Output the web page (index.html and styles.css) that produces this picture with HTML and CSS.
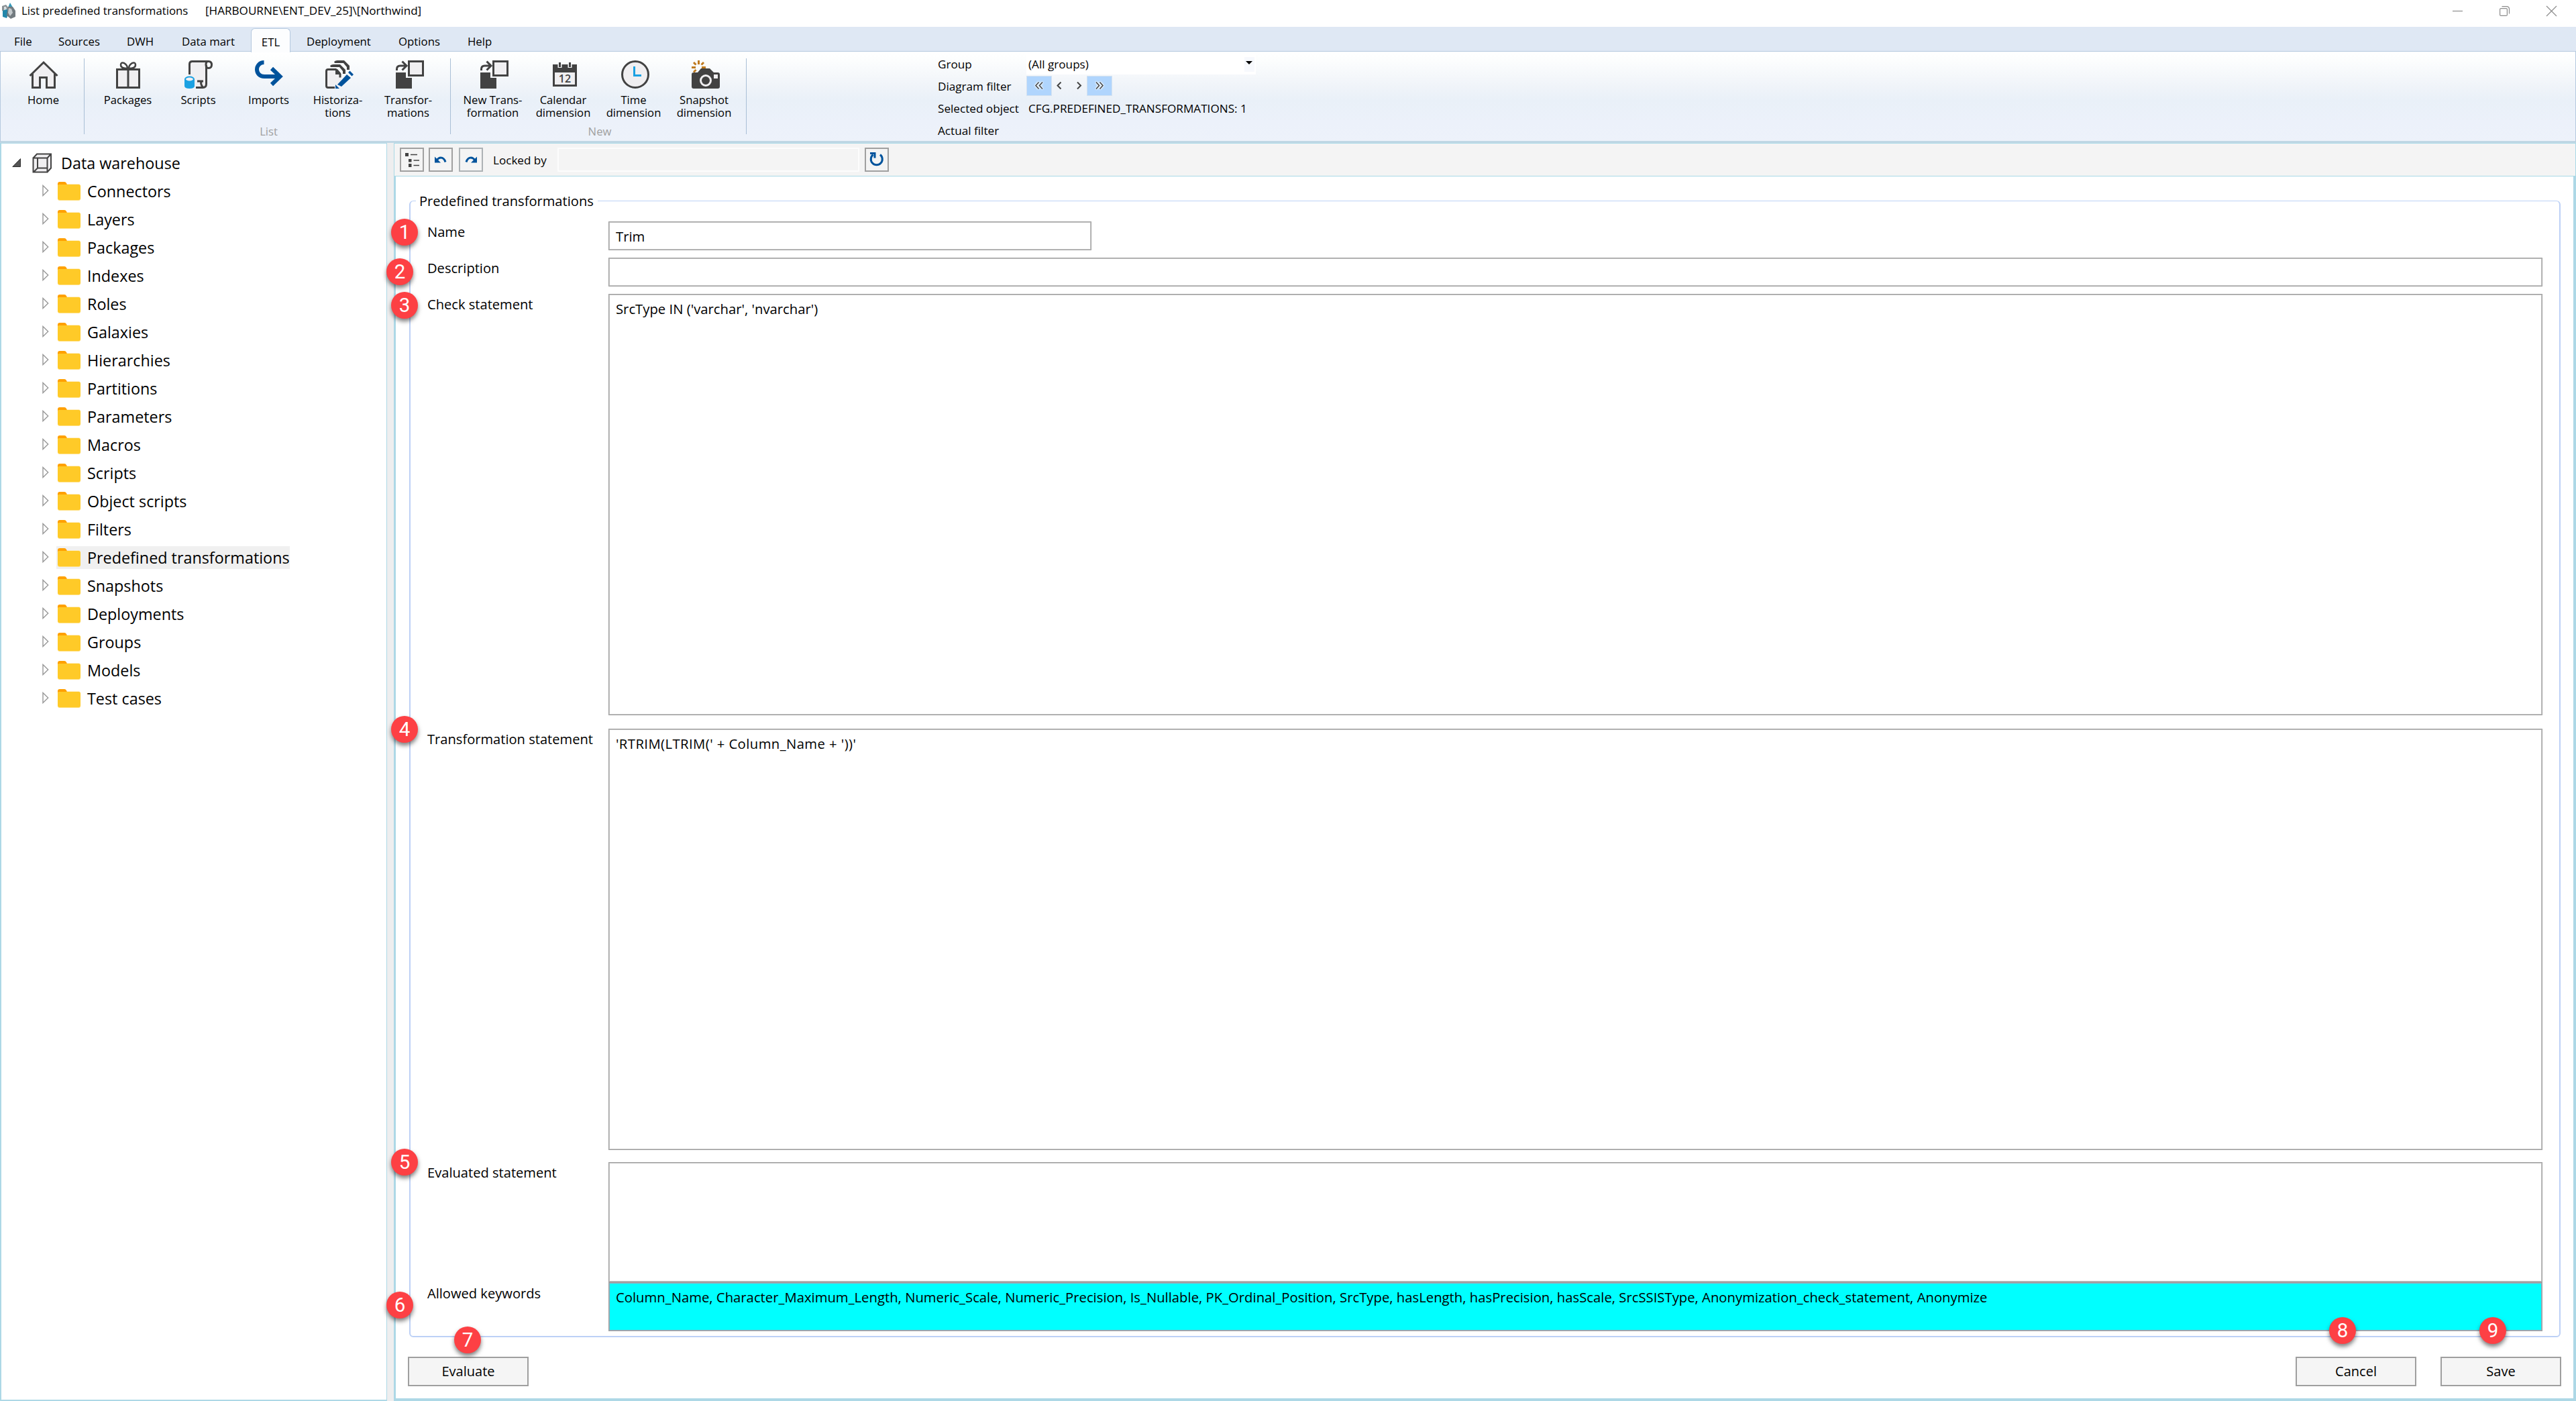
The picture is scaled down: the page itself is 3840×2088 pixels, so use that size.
FILE: index.html
```
<!DOCTYPE html>
<html lang="en">
<head>
<meta charset="utf-8">
<title>List predefined transformations</title>
<link rel="stylesheet" href="styles.css">
</head>
<body>
<svg class="defs" aria-hidden="true">
  <symbol id="folder" viewBox="0 0 34 28">
    <path d="M0 3q0-3 3-3h7q2 0 3 2l1 2h18v6H0z" fill="#ffa000"/>
    <path d="M14 3.2h17.500q2 0 2 2V8H12z" fill="#ffe9b0"/>
    <rect y="4" width="34" height="24" rx="3" fill="#ffe082"/>
    <rect y="4" width="34" height="23" rx="3" fill="#ffca28"/>
  </symbol>
  <symbol id="twisty" viewBox="0 0 10 18">
    <path d="M1 1.500v15L8.700 9z" fill="#fff" stroke="#989898" stroke-width="1.400"/>
  </symbol>
  <symbol id="transform" viewBox="0 0 42 42">
    <path d="M0 18h15v8h9v16H0z" fill="#424242"/>
    <rect x="19.500" y="1.500" width="21" height="21" fill="#f0eff1" stroke="#424242" stroke-width="3"/>
    <path d="M1.500 15v-2q0-5 5-5h9M9.500 1.500l6.500 6.500l-6.500 6.500" fill="none" stroke="#424242" stroke-width="3"/>
  </symbol>
</svg>

<header class="titlebar">
  <svg class="app-icon" width="22" height="24" viewBox="0 0 22 24">
    <path d="M13 0l4 7h-7z" fill="#3598b8"/>
    <path d="M1 5l6-2l4 5l-3 6l-7-2z" fill="#8a9296"/>
    <path d="M2 12l6-3l3 6l-3 8l-6-2z" fill="#2387aa"/>
    <path d="M10 6l7 0l4 6v9l-7 3l-6-5z" fill="#737b80"/>
    <path d="M11 8l4 1l2 6l-4 5l-3-5z" fill="#c4cacd"/>
    <path d="M4 6l3 0l1 4l-4 1z" fill="#d8dddf"/>
  </svg>
  <span class="title">List predefined transformations</span>
  <span class="title-db">[HARBOURNE\ENT_DEV_25]\[Northwind]</span>
  <div class="window-buttons">
    <svg width="15" height="15" viewBox="0 0 15 15"><path d="M0 7.500h15"/></svg>
    <svg width="15" height="15" viewBox="0 0 15 15"><rect x=".6" y="3.600" width="10.800" height="10.800" rx="1.500"/><path d="M3.500.6h7q4 0 4 4v7"/></svg>
    <svg width="15" height="15" viewBox="0 0 15 15"><path d="M0 0l15 15M15 0l-15 15"/></svg>
  </div>
</header>

<nav class="tabs">
  <span class="tab t-file">File</span>
  <span class="tab t-sources">Sources</span>
  <span class="tab t-dwh">DWH</span>
  <span class="tab t-mart">Data mart</span>
  <span class="tab active">ETL</span>
  <span class="tab t-deploy">Deployment</span>
  <span class="tab t-options">Options</span>
  <span class="tab t-help">Help</span>
</nav>

<section class="ribbon">
  <div class="group group-home">
    <div class="buttons">
      <div class="tool">
        <svg width="44" height="42" viewBox="0 0 44 42"><path d="M5.500 20v20.500h11V25.500h11v15h11V20L22 3.500z" fill="#f0eff1"/><path d="M1.500 23L22 3L42.500 23" fill="none" stroke="#424242" stroke-width="3"/><path d="M5.500 20v20.500h11V25.500h10v15h12V20" fill="none" stroke="#424242" stroke-width="3"/></svg>
        <span class="label">Home</span>
      </div>
    </div>
  </div>
  <div class="group group-list">
    <div class="buttons">
      <div class="tool">
        <svg width="36" height="42" viewBox="0 0 36 42"><rect x="1.500" y="13.500" width="33" height="27" fill="#f0eff1" stroke="#424242" stroke-width="3"/><path d="M18 13v28" stroke="#424242" stroke-width="3"/><path d="M17 12q-10 0-10-5t5-3q5 3 5 8zM19 12q10 0 10-5t-5-3q-5 3-5 8z" fill="none" stroke="#424242" stroke-width="2.600"/></svg>
        <span class="label">Packages</span>
      </div>
      <div class="tool">
        <svg width="42" height="42" viewBox="0 0 42 42"><path d="M7.500 22V6q0-4.500 4-4.500H34V36q0 4-4 4.500H16z" fill="#f0eff1"/><path d="M7.500 21V5.500q0-4 4-4H36q4.500 0 4.500 5t-4.500 5q-4 0-4-5t3-5M32.500 7V35q0 5.500-5 5.500H17" fill="none" stroke="#424242" stroke-width="3"/><path d="M19 31h9M25.500 31q-2.500 4 2 9" fill="none" stroke="#424242" stroke-width="3"/><path d="M0 28v10q0 4 7.500 4t7.500-4V28z" fill="#1ba1e2"/><ellipse cx="7.500" cy="28" rx="6.500" ry="3.500" fill="#f0eff1" stroke="#1ba1e2" stroke-width="2"/></svg>
        <span class="label">Scripts</span>
      </div>
      <div class="tool">
        <svg width="42" height="42" viewBox="0 0 42 42"><path d="M13.500 3C7 3 3 8 3 13.500S7 24 14 24H37M25 12l12.500 12L25 36" fill="none" stroke="#00539c" stroke-width="6"/></svg>
        <span class="label">Imports</span>
      </div>
      <div class="tool">
        <svg width="42" height="42" viewBox="0 0 42 42"><path d="M1.500 16q0-2.500 2.500-2.500h12l7 7V40.500H4q-2.500 0-2.500-2.500z" fill="#f0eff1"/><path d="M14 40.500H4q-2.500 0-2.500-2.500V16q0-2.500 2.500-2.500h11.500l6.500 7v5" fill="none" stroke="#424242" stroke-width="3"/><path d="M15 14v7h8v-2l-5-6zM7 8q2-2 5-2h10l8 8v6l-4 0v-4l-5-6H8zM13 2q2-2 5-2h10l8 8v6h-4v-4l-5-6H14z" fill="#424242"/><path d="M18 36L32 21l6 5L24 39z" fill="#00539c"/><path d="M34 18l2.500-2.500l5.500 5.500l-2.500 2.500zM15 36l6 6h-6z" fill="#00539c"/></svg>
        <span class="label wrap">Historiza-<br>tions</span>
      </div>
      <div class="tool">
        <svg width="42" height="42"><use href="#transform"/></svg>
        <span class="label wrap">Transfor-<br>mations</span>
      </div>
    </div>
    <span class="caption">List</span>
  </div>
  <div class="group group-new">
    <div class="buttons">
      <div class="tool">
        <svg width="42" height="42"><use href="#transform"/></svg>
        <span class="label wrap">New Trans-<br>formation</span>
      </div>
      <div class="tool">
        <svg width="36" height="42" viewBox="0 0 36 42"><rect x="1.500" y="10" width="33" height="27.500" fill="#f0eff1" stroke="#424242" stroke-width="3"/><path d="M0 6h36v12H0z" fill="#424242"/><path d="M10.500 3v8M25.500 3v8" stroke="#f5f7fa" stroke-width="6"/><path d="M10.500 3v7M25.500 3v7" stroke="#424242" stroke-width="3"/><text x="18" y="33" class="calendar-day">12</text></svg>
        <span class="label wrap">Calendar<br>dimension</span>
      </div>
      <div class="tool">
        <svg width="42" height="42" viewBox="0 0 42 42"><circle cx="21" cy="21" r="19.500" fill="#f0eff1" stroke="#424242" stroke-width="3"/><path d="M19.500 9v13.500H30" fill="none" stroke="#1ba1e2" stroke-width="3"/></svg>
        <span class="label wrap">Time<br>dimension</span>
      </div>
      <div class="tool">
        <svg width="42" height="42" viewBox="0 0 42 42"><path d="M3 18h6l5-6h13l6 6h6q3 0 3 3v18q0 3-3 3H3q-3 0-3-3V21q0-3 3-3z" fill="#424242"/><circle cx="21" cy="30" r="7.500" fill="#424242" stroke="#f0eff1" stroke-width="3"/><path d="M33 21h6v6h-6z" fill="#f0eff1"/><path d="M10.500 0v6M3 3l3.500 3.500M18 3l-3.500 3.500M0 10.500h6M15 10.500h6M3 17.500l3.500-3.500" stroke="#bf7a1f" stroke-width="3"/></svg>
        <span class="label wrap">Snapshot<br>dimension</span>
      </div>
    </div>
    <span class="caption">New</span>
  </div>
  <div class="filters">
    <div class="filter-row"><span class="filter-name">Group</span>
      <span class="combo">(All groups)<span class="combo-arrow"><svg width="10" height="5" viewBox="0 0 10 5"><path d="M0 0h10l-5 5z"/></svg></span></span></div>
    <div class="filter-row"><span class="filter-name">Diagram filter</span>
      <span class="pager">
        <span class="page edge"><svg width="12" height="11" viewBox="0 0 12 11"><path d="M5.500.5l-4.500 5l4.500 5M11 .5l-4.500 5l4.500 5"/></svg></span>
        <span class="page prev"><svg width="8" height="11" viewBox="0 0 8 11"><path d="M6.500.5l-5 5l5 5"/></svg></span>
        <span class="page next"><svg width="8" height="11" viewBox="0 0 8 11"><path d="M1 .5l5 5l-5 5"/></svg></span>
        <span class="page edge"><svg width="12" height="11" viewBox="0 0 12 11"><path d="M1 .5l4.500 5l-4.500 5M6.500 .5l4.500 5l-4.500 5"/></svg></span>
      </span></div>
    <div class="filter-row"><span class="filter-name">Selected object</span><span class="filter-value">CFG.PREDEFINED_TRANSFORMATIONS: 1</span></div>
    <div class="filter-row"><span class="filter-name">Actual filter</span></div>
  </div>
</section>

<main class="workspace">
  <aside class="tree">
    <div class="node root">
      <svg width="13" height="13" viewBox="0 0 13 13"><path d="M12.500.5v12H.8z" fill="#555" stroke="#333"/></svg>
      <svg class="cube" width="30" height="30" viewBox="0 0 30 30"><path d="M1.500 7.500L7 1.500h21v21L22 28.500H1.500z" fill="#f0eff1"/><path d="M1.500 7.500h21v21h-21zM1.500 7.500L7 1.500h21v21l-5.500 6M22.500 7.500l5.500-6M8 8v14.500h14M8 22.500l-6 6" fill="none" stroke="#424242" stroke-width="2"/></svg>
      <span>Data warehouse</span>
    </div>
    <div class="node"><svg width="10" height="18"><use href="#twisty"/></svg><span class="item"><svg width="34" height="28"><use href="#folder"/></svg>Connectors</span></div>
    <div class="node"><svg width="10" height="18"><use href="#twisty"/></svg><span class="item"><svg width="34" height="28"><use href="#folder"/></svg>Layers</span></div>
    <div class="node"><svg width="10" height="18"><use href="#twisty"/></svg><span class="item"><svg width="34" height="28"><use href="#folder"/></svg>Packages</span></div>
    <div class="node"><svg width="10" height="18"><use href="#twisty"/></svg><span class="item"><svg width="34" height="28"><use href="#folder"/></svg>Indexes</span></div>
    <div class="node"><svg width="10" height="18"><use href="#twisty"/></svg><span class="item"><svg width="34" height="28"><use href="#folder"/></svg>Roles</span></div>
    <div class="node"><svg width="10" height="18"><use href="#twisty"/></svg><span class="item"><svg width="34" height="28"><use href="#folder"/></svg>Galaxies</span></div>
    <div class="node"><svg width="10" height="18"><use href="#twisty"/></svg><span class="item"><svg width="34" height="28"><use href="#folder"/></svg>Hierarchies</span></div>
    <div class="node"><svg width="10" height="18"><use href="#twisty"/></svg><span class="item"><svg width="34" height="28"><use href="#folder"/></svg>Partitions</span></div>
    <div class="node"><svg width="10" height="18"><use href="#twisty"/></svg><span class="item"><svg width="34" height="28"><use href="#folder"/></svg>Parameters</span></div>
    <div class="node"><svg width="10" height="18"><use href="#twisty"/></svg><span class="item"><svg width="34" height="28"><use href="#folder"/></svg>Macros</span></div>
    <div class="node"><svg width="10" height="18"><use href="#twisty"/></svg><span class="item"><svg width="34" height="28"><use href="#folder"/></svg>Scripts</span></div>
    <div class="node"><svg width="10" height="18"><use href="#twisty"/></svg><span class="item"><svg width="34" height="28"><use href="#folder"/></svg>Object scripts</span></div>
    <div class="node"><svg width="10" height="18"><use href="#twisty"/></svg><span class="item"><svg width="34" height="28"><use href="#folder"/></svg>Filters</span></div>
    <div class="node"><svg width="10" height="18"><use href="#twisty"/></svg><span class="item selected"><svg width="34" height="28"><use href="#folder"/></svg>Predefined transformations</span></div>
    <div class="node"><svg width="10" height="18"><use href="#twisty"/></svg><span class="item"><svg width="34" height="28"><use href="#folder"/></svg>Snapshots</span></div>
    <div class="node"><svg width="10" height="18"><use href="#twisty"/></svg><span class="item"><svg width="34" height="28"><use href="#folder"/></svg>Deployments</span></div>
    <div class="node"><svg width="10" height="18"><use href="#twisty"/></svg><span class="item"><svg width="34" height="28"><use href="#folder"/></svg>Groups</span></div>
    <div class="node"><svg width="10" height="18"><use href="#twisty"/></svg><span class="item"><svg width="34" height="28"><use href="#folder"/></svg>Models</span></div>
    <div class="node"><svg width="10" height="18"><use href="#twisty"/></svg><span class="item"><svg width="34" height="28"><use href="#folder"/></svg>Test cases</span></div>
  </aside>

  <section class="detail">
    <div class="toolbar">
      <span class="tool-button b-tree"><svg width="21" height="21" viewBox="0 0 21 21"><path d="M0 0h5v5H0zM5 9h4.500v4.500H5zM5 16h4.500v5H5z" fill="#424242"/><path d="M8 2.500h10M12.500 11h8.500M12.500 18.500h8.500" stroke="#424242" stroke-width="1.500"/></svg></span>
      <span class="tool-button b-undo"><svg width="18" height="10" viewBox="0 0 18 10"><path d="M16 8.500Q14 2 9 2Q5.500 2 3 6" fill="none" stroke="#00539c" stroke-width="3"/><path d="M0 .5v9h9z" fill="#00539c"/></svg></span>
      <span class="tool-button b-redo"><svg width="18" height="10" viewBox="0 0 18 10"><path d="M2 8.500Q4 2 9 2Q12.500 2 15 6" fill="none" stroke="#00539c" stroke-width="3"/><path d="M18 .5v9H9z" fill="#00539c"/></svg></span>
      <span class="locked">Locked by</span>
      <span class="locked-value"></span>
      <span class="tool-button"><svg width="22" height="22" viewBox="0 0 22 22"><path d="M16 3.500a8.500 8.500 0 1 1-10.500 0" fill="none" stroke="#00539c" stroke-width="3"/><path d="M1 1.500h7v7" fill="none" stroke="#00539c" stroke-width="3"/></svg></span>
    </div>
    <div class="pane">
      <fieldset class="box">
        <legend>Predefined transformations</legend>
        <div class="field r-name"><label>Name</label><div class="input short">Trim</div></div>
        <div class="field r-desc"><label>Description</label><div class="input"></div></div>
        <div class="field r-check"><label>Check statement</label><div class="input">SrcType IN ('varchar', 'nvarchar')</div></div>
        <div class="field r-trans"><label>Transformation statement</label><div class="input">'RTRIM(LTRIM(' + Column_Name + '))'</div></div>
        <div class="field r-eval"><label>Evaluated statement</label><div class="input"></div></div>
        <div class="field r-keys"><label>Allowed keywords</label><div class="input keywords">Column_Name, Character_Maximum_Length, Numeric_Scale, Numeric_Precision, Is_Nullable, PK_Ordinal_Position, SrcType, hasLength, hasPrecision, hasScale, SrcSSISType, Anonymization_check_statement, Anonymize</div></div>
      </fieldset>
      <div class="actions">
        <button class="action evaluate">Evaluate</button>
        <button class="action">Cancel</button>
        <button class="action">Save</button>
      </div>
    </div>
  </section>
</main>

<span class="badge n1">1</span>
<span class="badge n2">2</span>
<span class="badge n3">3</span>
<span class="badge n4">4</span>
<span class="badge n5">5</span>
<span class="badge n6">6</span>
<span class="badge n7">7</span>
<span class="badge n8">8</span>
<span class="badge n9">9</span>
</body>
</html>
```
FILE: styles.css
```
* { box-sizing: border-box; }
body {
  margin: 0;
  width: 3840px;
  height: 2088px;
  display: flex;
  flex-direction: column;
  position: relative;
  overflow: hidden;
  background: #fff;
  color: #000;
  font-family: "Open Sans", "Noto Sans", sans-serif;
}
svg { display: block; flex: none; }
.defs { position: absolute; width: 0; height: 0; }

/* Title bar */
.titlebar {
  height: 40px;
  display: flex;
  padding-left: 2px;
  font-size: 16.8px;
  line-height: 32px;
}
.app-icon { margin: 4px 7px 0 0; }
.title { width: 275px; padding-left: 1px; }
.title-db { font-size: 17.1px; }
.window-buttons {
  margin-left: auto;
  display: flex;
  gap: 55px;
  padding: 9px 29px 0 0;
}
.window-buttons svg { fill: none; stroke: #8c8c8c; stroke-width: 1.2; overflow: visible; }

/* Tab strip */
.tabs {
  height: 36px;
  display: flex;
  background: #dfe8f4;
  font-size: 16.8px;
  line-height: 44px;
  padding-left: 21px;
  white-space: nowrap;
}
.t-file { width: 66px; }
.t-sources { width: 102px; }
.t-dwh { width: 82px; }
.t-mart { width: 103px; }
.tab.active {
  width: 59px;
  height: 36px;
  margin-top: 2px;
  line-height: 40px;
  text-align: center;
  background: #fcfdfe;
  border: 1px solid #b5c9df;
  border-bottom: 0;
  border-radius: 6px 6px 0 0;
  z-index: 1;
}
.t-deploy { width: 161px; padding-left: 24px; }
.t-options { width: 103px; }

/* Ribbon */
.ribbon {
  height: 137px;
  display: flex;
  border: 1px solid #b5c9df;
  border-bottom: 3px solid #c0d7e4;
  background: linear-gradient(#fff 0, #fdfefe 8%, #f0f4f9 38%, #e9f0f8 55%, #ecf1fa 80%, #edf2fa 100%);
  font-size: 16.65px;
  line-height: 19px;
}
.group {
  display: flex;
  flex-direction: column;
  height: 113px;
  margin-top: 10px;
  padding-top: 3px;
  border-right: 1px solid #a9bfd6;
}
.group-home { width: 125px; padding-left: 11px; }
.group-list { width: 546px; padding-left: 12px; }
.group-new { width: 441px; padding-left: 12px; }
.buttons { display: flex; flex: none; height: 96px; }
.tool {
  width: 105px;
  display: flex;
  flex-direction: column;
  align-items: center;
  gap: 7px;
  text-align: center;
  white-space: nowrap;
}
.label.wrap { margin-left: -4px; }
.calendar-day { font: 600 16px "Open Sans", sans-serif; fill: #424242; text-anchor: middle; }
.caption { width: 525px; text-align: center; color: #a0a0a0; }
.group-new .caption { width: 420px; }

.filters {
  display: flex;
  flex-direction: column;
  padding: 2px 0 0 285px;
  font-size: 17.15px;
  line-height: 33px;
}
.filter-row { display: flex; height: 33px; align-items: center; white-space: nowrap; }
.filter-name { width: 132px; }
.filter-value { padding-left: 3px; }
.combo {
  width: 342px;
  height: 30px;
  display: flex;
  justify-content: space-between;
  align-items: center;
  padding: 0 2px 0 3px;
  background: #fff;
}
.combo-arrow { width: 15px; height: 22px; padding: 6px 0 0 2px; background: #f7f9fd; }
.pager { display: flex; margin-top: -2px; }
.page { width: 26px; height: 30px; display: flex; align-items: center; justify-content: center; }
.page.prev { padding-right: 4px; }
.page.next { padding-left: 3px; }
.page.edge { width: 38px; border: 1px solid #d5e2f0; background: #b0d5fd; }
.page svg { fill: none; stroke: #444; stroke-width: 2; overflow: visible; }
.page.edge svg { stroke-width: 1.5; filter: drop-shadow(0 0 1px #fff) drop-shadow(0 0 1px #fff); }

/* Workspace */
.workspace { flex: 1; display: flex; background: #eeeeef; min-height: 0; }
.tree {
  width: 577px;
  height: 1875px;
  border: 2px solid #add8e6;
  border-right-width: 1px;
  border-top-width: 1px;
  background: #fff;
  padding-top: 8px;
  font-size: 23.35px;
  line-height: 42px;
}
.node { height: 42px; display: flex; align-items: center; padding-left: 61px; white-space: nowrap; }
.node > svg:first-child { margin-bottom: 2px; }
.node.root { padding-left: 16px; }
.cube { margin: 0 13px 0 17px; }
.item {
  height: 34px;
  margin-left: 11px;
  padding-left: 2px;
  display: flex;
  align-items: center;
  gap: 10px;
  line-height: 34px;
}
.item.selected { background: #f0f0f0; }

.detail { flex: 1; margin-left: 10px; display: flex; flex-direction: column; }
.toolbar {
  height: 50px;
  display: flex;
  align-items: flex-start;
  padding: 6px 8px 0;
  border: 1px solid #a9d9e6;
  background: #f4f4f4;
  font-size: 17.1px;
  line-height: 37px;
}
.tool-button {
  width: 36px;
  height: 36px;
  display: flex;
  align-items: center;
  justify-content: center;
  border: 2px solid #a0a0a0;
  background: #f4f4f4;
}
.b-tree { margin-right: 7px; }
.b-undo { margin-right: 9px; }
.b-redo { border-color: #adb2b5; }
.b-undo svg, .b-redo svg { margin-top: -1px; }
.locked { width: 111px; padding-left: 15px; }
.locked-value { width: 450px; height: 36px; margin-right: 8px; border: 2px solid #fcfcfc; }

.pane {
  flex: 1;
  display: flex;
  flex-direction: column;
  border: solid #add8e6;
  border-width: 0 4px 4px 3px;
  background: #fff;
  padding: 22px 19px 0 20px;
}
.box {
  height: 1708px;
  min-width: 0;
  margin: 0;
  padding: 17px 0 0 1px;
  border: 2px solid #bdd1f6;
  border-top-width: 1px;
  border-radius: 6px;
  font-size: 20.12px;
  line-height: 28px;
}
.box legend { margin-left: 7px; padding: 0 6px 0 5px; height: 28px; line-height: 29px; }
.field { display: flex; padding-right: 25px; }
.field label { width: 294px; padding: 1px 0 0 24px; flex: none; }
.input {
  flex: 1;
  padding: 7px 10px;
  border: 1px solid #9f9f9f;
  box-shadow: inset 0 0 0 1px #c2c2c2;
  background: #fff;
  font-size: 20.29px;
}
.input.short { flex: none; width: 720px; }
.r-name, .r-desc { height: 43px; margin-bottom: 11px; }
.r-check { height: 628px; margin-bottom: 20px; }
.r-trans { height: 628px; margin-bottom: 18px; }
.r-trans .input { letter-spacing: .42px; }
.r-eval { height: 179px; }
.r-keys { height: 73px; }
.r-keys label { padding-top: 2px; }
.keywords { background: #0ff; box-shadow: inset 0 0 0 1px #9ab; }

.actions { display: flex; gap: 36px; padding: 29px 0 0 0; margin: 0 -1px 0 -2px; }
.action {
  width: 180px;
  height: 44px;
  border: 2px solid #9f9f9f;
  background: #f5f5f5;
  padding: 0;
  font: 20.05px/40px "Open Sans", "Noto Sans", sans-serif;
  color: #000;
}
.evaluate { margin-right: auto; }

/* Numbered callouts over the form */
.badge {
  position: absolute;
  width: 40px;
  height: 40px;
  border-radius: 50%;
  background: #fd4044;
  box-shadow: 0 4px 6px rgba(0, 0, 0, .5);
  color: #fff;
  font: 29.5px/40px Roboto, "Liberation Sans", sans-serif;
  text-align: center;
}
.n1 { left: 583px; top: 326px; }
.n2 { left: 576px; top: 385px; }
.n3 { left: 583px; top: 435px; }
.n4 { left: 583px; top: 1067px; }
.n5 { left: 583px; top: 1712px; }
.n6 { left: 576px; top: 1925px; }
.n7 { left: 677px; top: 1977px; }
.n8 { left: 3472px; top: 1963px; }
.n9 { left: 3696px; top: 1963px; }
```
